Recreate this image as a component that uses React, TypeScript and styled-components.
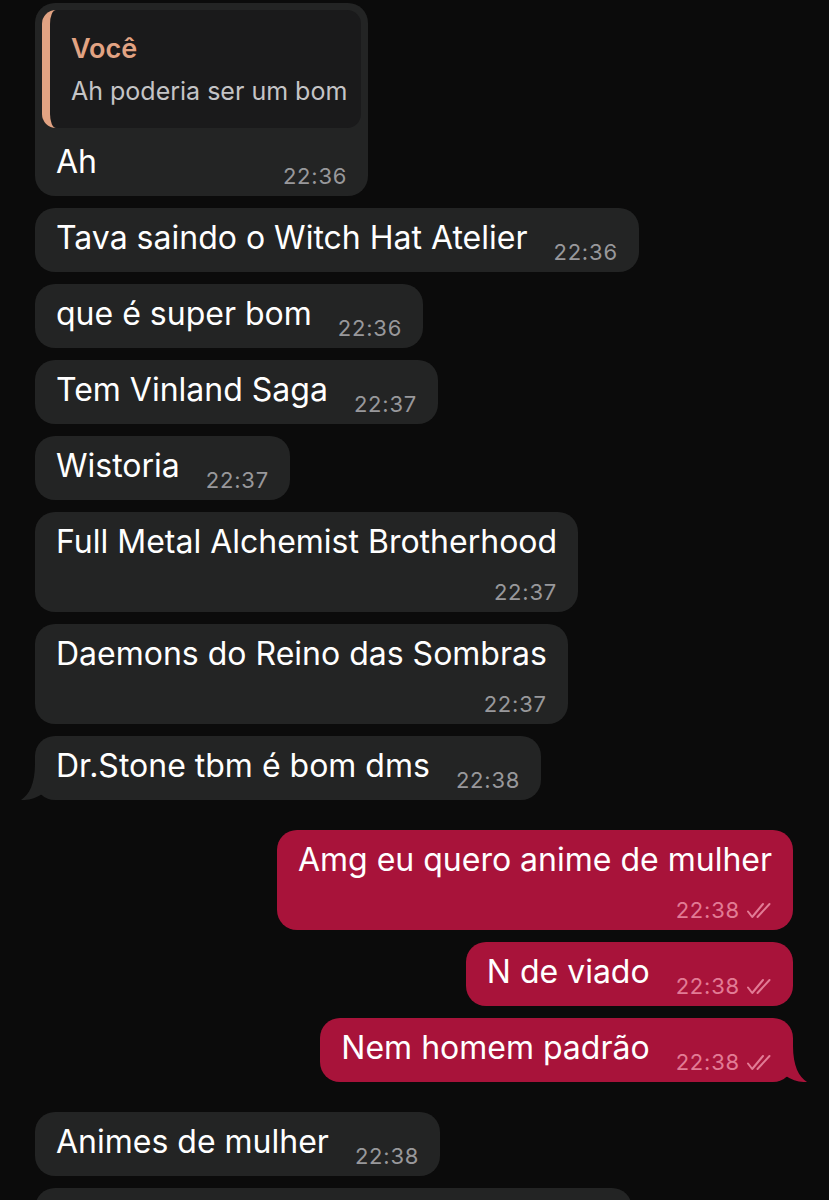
import React from "react";
import styled, { createGlobalStyle } from "styled-components";

const GlobalStyle = createGlobalStyle`
  html, body {
    margin: 0;
    background: #0b0b0b;
    font-family: Inter, "Noto Sans", sans-serif;
  }
`;

const colors = {
  inBubble: "#232424",
  outBubble: "#a8133a",
  inTime: "#98989b",
  outTime: "#e27b95",
  quoteBg: "#1a1a1b",
  peach: "#e2a383",
  quoteText: "#c4c4c6",
};

const Page = styled.div`
  display: flex;
  flex-direction: column;
  gap: 30px;
  padding: 3px 36px 0 35px;
`;

const Group = styled.div<{ $out?: boolean }>`
  display: flex;
  flex-direction: column;
  gap: 12px;
  align-items: ${({ $out }) => ($out ? "flex-end" : "flex-start")};
`;

const Bubble = styled.div<{ $out?: boolean; $stacked?: boolean }>`
  position: relative;
  display: flex;
  flex-direction: ${({ $stacked }) => ($stacked ? "column" : "row")};
  align-items: flex-end;
  gap: 26px;
  padding: 10px 21px 14px 21px;
  border-radius: 20px;
  background: ${({ $out }) => ($out ? colors.outBubble : colors.inBubble)};
`;

const ReplyBubble = styled(Bubble)`
  flex-direction: column;
  align-items: stretch;
  gap: 0;
  padding-right: 21px;
`;

const Peek = styled(Bubble)`
  width: 597px;
  height: 64px;
  box-sizing: border-box;
`;

const Text = styled.span`
  align-self: flex-start;
  font-size: 32px;
  line-height: 40px;
  color: #fff;
  white-space: nowrap;
`;

const Meta = styled.span<{ $out?: boolean; $stacked?: boolean }>`
  display: flex;
  align-items: center;
  gap: 6px;
  margin-top: ${({ $stacked }) => ($stacked ? "-6px" : "0")};
  margin-bottom: -4px;
  font-size: 22px;
  line-height: 20px;
  letter-spacing: 0.8px;
  color: ${({ $out }) => ($out ? colors.outTime : colors.inTime)};
`;

const Quote = styled.div`
  margin: -3px -14px 14px -14px;
  padding: 22px 14px 21px 21px;
  border-left: 8px solid ${colors.peach};
  border-radius: 14px;
  background: ${colors.quoteBg};
`;

const QuoteName = styled.div`
  font-size: 27px;
  line-height: 34px;
  font-weight: 600;
  color: ${colors.peach};
`;

const QuoteText = styled.div`
  margin-top: 9px;
  font-size: 25px;
  line-height: 32px;
  color: ${colors.quoteText};
  white-space: nowrap;
`;

const ReplyRow = styled.div`
  display: flex;
  justify-content: space-between;
  align-items: flex-end;
`;

const TailSvg = styled.svg<{ $out?: boolean }>`
  position: absolute;
  bottom: 0;
  ${({ $out }) => ($out ? "right: -14px; transform: scaleX(-1);" : "left: -14px;")}
  width: 30px;
  height: 40px;
`;

const Tail = ({ out }: { out?: boolean }) => (
  <TailSvg $out={out} viewBox="0 0 30 40">
    <path
      d="M14 4 C14 24 8 35 0 40 Q12 40.5 21 34 L29 28 L29 4 Z"
      fill={out ? colors.outBubble : colors.inBubble}
    />
  </TailSvg>
);

const Checks = () => (
  <svg width="26" height="17" viewBox="0 0 26 17" fill="none">
    <path
      d="M2 9.5 L6.2 15 L17 2 M11.5 15 L23.5 2"
      stroke={colors.outTime}
      strokeWidth="2"
      strokeLinecap="round"
      strokeLinejoin="round"
    />
  </svg>
);

type Msg = { text: string; time: string; stacked?: boolean; tail?: boolean };

const Message = ({ m, out }: { m: Msg; out?: boolean }) => (
  <Bubble $out={out} $stacked={m.stacked}>
    <Text>{m.text}</Text>
    <Meta $out={out} $stacked={m.stacked}>
      {m.time}
      {out && <Checks />}
    </Meta>
    {m.tail && <Tail out={out} />}
  </Bubble>
);

const incoming: Msg[] = [
  { text: "Tava saindo o Witch Hat Atelier", time: "22:36" },
  { text: "que é super bom", time: "22:36" },
  { text: "Tem Vinland Saga", time: "22:37" },
  { text: "Wistoria", time: "22:37" },
  { text: "Full Metal Alchemist Brotherhood", time: "22:37", stacked: true },
  { text: "Daemons do Reino das Sombras", time: "22:37", stacked: true },
  { text: "Dr.Stone tbm é bom dms", time: "22:38", tail: true },
];

const outgoing: Msg[] = [
  { text: "Amg eu quero anime de mulher", time: "22:38", stacked: true },
  { text: "N de viado", time: "22:38" },
  { text: "Nem homem padrão", time: "22:38", tail: true },
];

const App: React.FC = () => (
  <>
    <GlobalStyle />
    <Page>
      <Group>
        <ReplyBubble>
          <Quote>
            <QuoteName>Você</QuoteName>
            <QuoteText>Ah poderia ser um bom</QuoteText>
          </Quote>
          <ReplyRow>
            <Text>Ah</Text>
            <Meta>22:36</Meta>
          </ReplyRow>
        </ReplyBubble>
        {incoming.map((m, i) => (
          <Message key={i} m={m} />
        ))}
      </Group>
      <Group $out>
        {outgoing.map((m, i) => (
          <Message key={i} m={m} out />
        ))}
      </Group>
      <Group>
        <Message m={{ text: "Animes de mulher", time: "22:38" }} />
        <Peek />
      </Group>
    </Page>
  </>
);

export default App;
